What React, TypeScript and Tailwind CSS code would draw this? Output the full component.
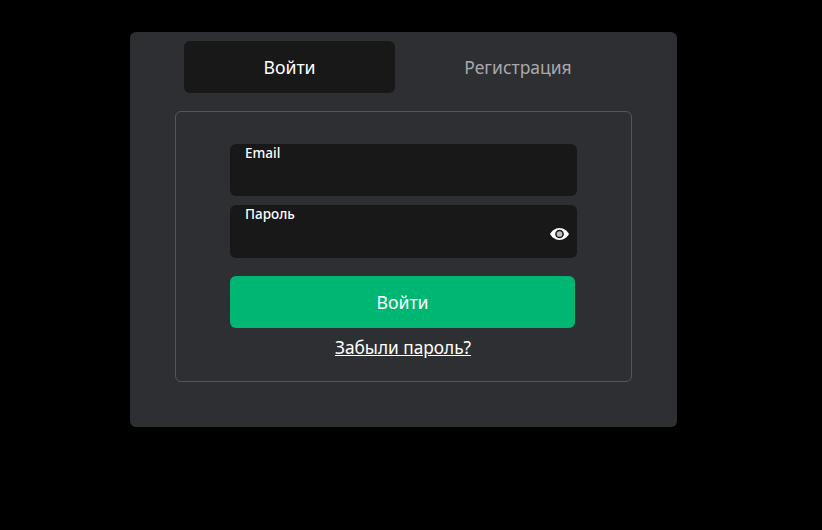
import React from "react";

function Field({ label, eye, h }: { label: string; eye?: boolean; h: string }) {
  return (
    <div className={`relative w-[347px] ${h} rounded-[6px] bg-[#181818] pl-[15px] pt-[1px]`}>
      <div className="text-[13.5px] font-medium leading-[16px] text-white">{label}</div>
      {eye && (
        <svg className="absolute right-[8px] top-[22px]" width="19" height="14" viewBox="0 0 19 14">
          <path fill="#fff" d="M9.500 1C14 1 17.500 4.200 19 7c-1.500 2.800-5 6-9.500 6S1.500 9.800 0 7c1.500-2.800 5-6 9.500-6Z" />
          <circle cx="9.500" cy="7" r="3.600" fill="#bdbdbd" stroke="#181818" strokeWidth="1.500" />
        </svg>
      )}
    </div>
  );
}

export default function App() {
  return (
    <div className="h-[530px] w-full overflow-hidden bg-black pl-[130px] pt-[32px] font-['Noto_Sans',sans-serif]">
      <div className="h-[395px] w-[547px] rounded-[6px] bg-[#2e2f33] pt-[9px]">
        <div className="ml-[54px] flex">
          <div className="flex h-[52px] w-[211px] items-center justify-center rounded-[6px] bg-[#181818] text-[17.700px] text-white">
            Войти
          </div>
          <div className="flex h-[52px] w-[245px] items-center justify-center pl-[1px] text-[17.500px] text-[#a9a9ac]">
            Регистрация
          </div>
        </div>
        <div className="ml-[45px] mt-[18px] h-[271px] w-[457px] rounded-[6px] border border-[#55565a] pl-[54px] pt-[32px]">
          <div className="flex flex-col gap-[9px]">
            <Field label="Email" h="h-[52px]" />
            <Field label="Пароль" h="h-[53px]" eye />
          </div>
          <div className="mt-[18px] flex h-[52px] w-[345px] items-center justify-center rounded-[6px] bg-[#00b673] text-[17.700px] text-white">
            Войти
          </div>
          <div className="mt-[8px] w-[345px] pl-[1px] text-center text-[17.250px] leading-[24px] text-white underline">
            Забыли пароль?
          </div>
        </div>
      </div>
    </div>
  );
}
